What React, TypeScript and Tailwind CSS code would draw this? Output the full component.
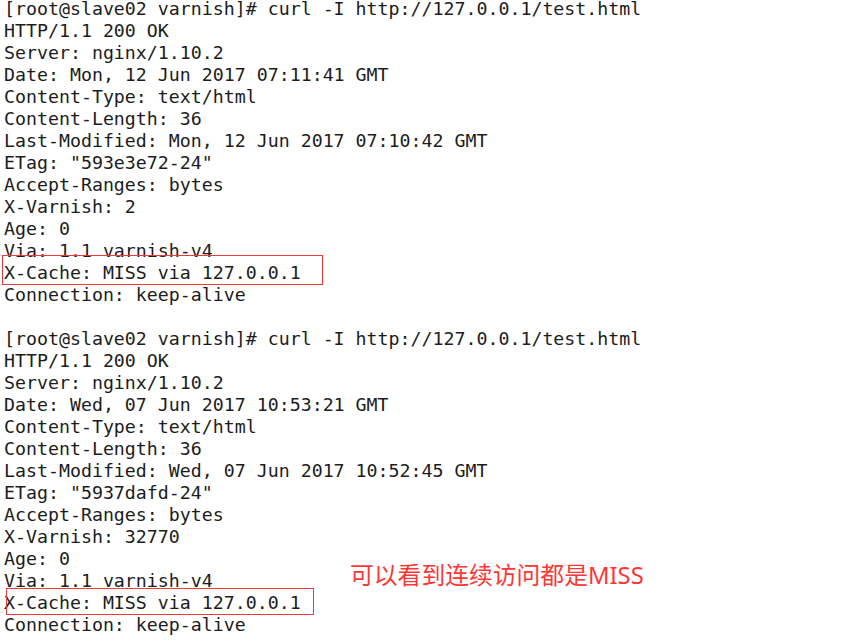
const first = [
  "[root@slave02 varnish]# curl -I http://127.0.0.1/test.html",
  "HTTP/1.1 200 OK",
  "Server: nginx/1.10.2",
  "Date: Mon, 12 Jun 2017 07:11:41 GMT",
  "Content-Type: text/html",
  "Content-Length: 36",
  "Last-Modified: Mon, 12 Jun 2017 07:10:42 GMT",
  'ETag: "593e3e72-24"',
  "Accept-Ranges: bytes",
  "X-Varnish: 2",
  "Age: 0",
  "Via: 1.1 varnish-v4",
  "X-Cache: MISS via 127.0.0.1",
  "Connection: keep-alive",
];

const second = [
  "[root@slave02 varnish]# curl -I http://127.0.0.1/test.html",
  "HTTP/1.1 200 OK",
  "Server: nginx/1.10.2",
  "Date: Wed, 07 Jun 2017 10:53:21 GMT",
  "Content-Type: text/html",
  "Content-Length: 36",
  "Last-Modified: Wed, 07 Jun 2017 10:52:45 GMT",
  'ETag: "5937dafd-24"',
  "Accept-Ranges: bytes",
  "X-Varnish: 32770",
  "Age: 0",
  "Via: 1.1 varnish-v4",
  "X-Cache: MISS via 127.0.0.1",
  "Connection: keep-alive",
];

export default function App() {
  const lines = [...first, "", ...second];
  return (
    <div className="relative w-[850px] h-[641px] bg-white overflow-hidden">
      {/* terminal output */}
      <pre className="pl-[4px] text-[18.25px] text-[#1c1c1c] font-['DejaVu_Sans_Mono',monospace]">
        {lines.map((l, i) => (
          <div key={i} className="h-[22px] leading-[18px] whitespace-pre">
            {l}
          </div>
        ))}
      </pre>

      {/* highlight boxes */}
      <div className="absolute left-[2px] top-[255px] w-[321px] h-[30px] border border-[#f03a3a]" />
      <div className="absolute left-[6px] top-[588px] w-[308px] h-[27px] border border-[#f03a3a]" />

      {/* note */}
      <div className="absolute left-[350px] top-[559px] text-[23.8px] leading-[32px] text-[#ff3636] font-['Noto_Sans','Noto_Sans_CJK_SC',sans-serif]">
        可以看到连续访问都是MISS
      </div>
    </div>
  );
}
